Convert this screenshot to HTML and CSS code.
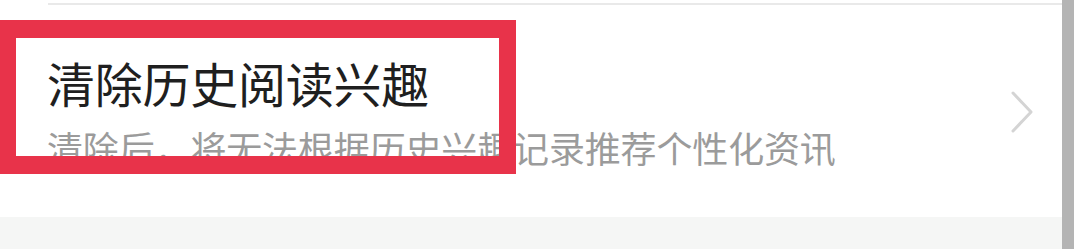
FILE: index.html
```html
<!DOCTYPE html>
<html lang="zh-CN">
<head>
<meta charset="utf-8">
<title>清除历史阅读兴趣</title>
<link rel="stylesheet" href="styles.css">
</head>
<body>
<div class="screen">
  <div class="main">
    <div class="divider"></div>
    <div class="item">
      <div class="text">
        <div class="title">清除历史阅读兴趣</div>
        <div class="desc">清除后，将无法根据历史兴趣记录推荐个性化资讯</div>
      </div>
      <svg class="chevron" width="24" height="44" viewBox="0 0 24 44">
        <polyline points="3,3 21,22 3,41" fill="none" stroke="#d4d4d4" stroke-width="3" stroke-linecap="round" stroke-linejoin="round"/>
      </svg>
    </div>
    <div class="footer"></div>
  </div>
  <div class="edge"></div>
  <div class="gutter"></div>
</div>
<div class="annot"></div>
</body>
</html>
```

FILE: styles.css
```css
html, body {
  margin: 0;
  padding: 0;
  background: #ffffff;
}
body {
  width: 1080px;
  height: 249px;
  overflow: hidden;
  position: relative;
  font-family: "Noto Sans CJK SC", "Noto Sans", sans-serif;
}
.screen {
  display: flex;
  height: 249px;
}
.main {
  flex: 1;
  display: flex;
  flex-direction: column;
  padding-top: 3px;
  box-sizing: border-box;
}
.divider {
  height: 2px;
  margin-left: 48px;
  background: #e9e9e9;
}
.item {
  height: 212px;
  box-sizing: border-box;
  display: flex;
  justify-content: space-between;
  align-items: flex-start;
  padding: 53px 28px 0 47px;
}
.title {
  font-size: 48px;
  line-height: 48px;
  letter-spacing: -0.25px;
  color: #1f1f1f;
}
.desc {
  margin-top: 23px;
  font-size: 36px;
  line-height: 36px;
  letter-spacing: -0.15px;
  color: #9b9b9b;
}
.chevron {
  margin-top: 32px;
  display: block;
}
.footer {
  flex: 1;
  background: #f5f6f5;
}
.edge {
  width: 12px;
  background: #b4b4b4;
}
.gutter {
  width: 6px;
  background: #ffffff;
}
.annot {
  position: absolute;
  left: 0;
  top: 20px;
  width: 516px;
  height: 154px;
  box-sizing: border-box;
  border-style: solid;
  border-color: #e8334a;
  border-width: 18px 17px 18px 16px;
}
```
